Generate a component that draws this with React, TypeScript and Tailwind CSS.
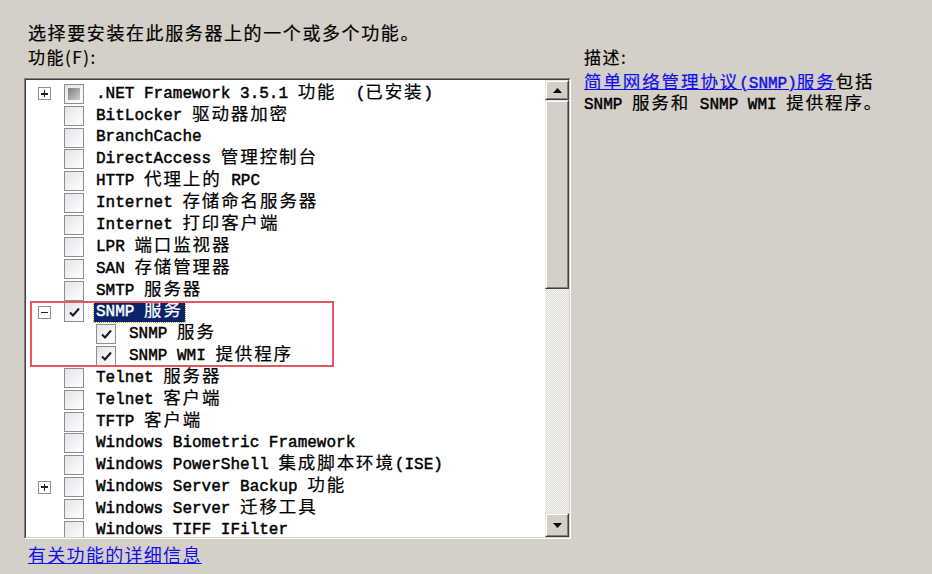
import type { ReactNode } from "react";

type Row = {
  label: string;
  state?: "none" | "checked" | "mixed";
  expander?: "+" | "-";
  child?: boolean;
  selected?: boolean;
};

const rows: Row[] = [
  { label: ".NET Framework 3.5.1 功能  (已安装)", state: "mixed", expander: "+" },
  { label: "BitLocker 驱动器加密" },
  { label: "BranchCache" },
  { label: "DirectAccess 管理控制台" },
  { label: "HTTP 代理上的 RPC" },
  { label: "Internet 存储命名服务器" },
  { label: "Internet 打印客户端" },
  { label: "LPR 端口监视器" },
  { label: "SAN 存储管理器" },
  { label: "SMTP 服务器" },
  { label: "SNMP 服务", state: "checked", expander: "-", selected: true },
  { label: "SNMP 服务", state: "checked", child: true },
  { label: "SNMP WMI 提供程序", state: "checked", child: true },
  { label: "Telnet 服务器" },
  { label: "Telnet 客户端" },
  { label: "TFTP 客户端" },
  { label: "Windows Biometric Framework" },
  { label: "Windows PowerShell 集成脚本环境(ISE)" },
  { label: "Windows Server Backup 功能", expander: "+" },
  { label: "Windows Server 迁移工具" },
  { label: "Windows TIFF IFilter" },
];

const CJK = /([\u2E80-\u9FFF\u3000-\u303F\uFF00-\uFFEF]+)/;

// SimSun-style mixed text: half-width latin, double-width hanzi
function Mixed({ text }: { text: string }) {
  return (
    <>
      {text.split(CJK).map((part, i) =>
        CJK.test(part) ? (
          <span key={i} className="text-[17.5px] tracking-[1.9px] [-webkit-text-stroke:0.2px]">
            {part}
          </span>
        ) : (
          <span key={i} className="whitespace-pre [-webkit-text-stroke:0.45px]">
            {part}
          </span>
        )
      )}
    </>
  );
}

function Expander({ sign }: { sign: "+" | "-" }) {
  return (
    <div className="relative w-[13px] h-[13px] border border-[#8f8f8f] bg-white flex items-center justify-center">
      <div className="absolute w-[7px] h-[1.5px] bg-[#222]" />
      {sign === "+" && <div className="absolute w-[1.5px] h-[7px] bg-[#222]" />}
    </div>
  );
}

function Checkbox({ state = "none" }: { state?: Row["state"] }) {
  return (
    <div className="w-[20px] h-[20px] shrink-0 border border-[#8e8e8e] bg-gradient-to-br from-[#e6e2ea] to-white flex items-center justify-center">
      {state === "mixed" && (
        <div className="w-[12px] h-[12px] bg-gradient-to-br from-[#7e7e7e] to-[#d0d0d0]" />
      )}
      {state === "checked" && (
        <svg width="13" height="13" viewBox="0 0 13 13">
          <path d="M2 6.5 L5 9.5 L11 2.5" fill="none" stroke="#1a1a1a" strokeWidth="2" />
        </svg>
      )}
    </div>
  );
}

function Raised({ className = "", children }: { className?: string; children?: ReactNode }) {
  return (
    <div className={`border border-t-[#e8e6e1] border-l-[#e8e6e1] border-b-[#404040] border-r-[#404040] ${className}`}>
      <div className="w-full h-full border border-t-white border-l-white border-b-[#808080] border-r-[#808080] bg-[#d4d0c8] flex items-center justify-center">
        {children}
      </div>
    </div>
  );
}

function Scrollbar() {
  return (
    <div className="w-[24px] h-full flex flex-col">
      <Raised className="h-[20px] shrink-0">
        <svg width="9" height="5" viewBox="0 0 9 5">
          <path d="M0 5 L4.5 0 L9 5 Z" fill="#000" />
        </svg>
      </Raised>
      <Raised className="h-[189px] shrink-0" />
      <div className="flex-1 bg-[repeating-conic-gradient(#dcdad5_0_25%,#f7f7f5_0_50%)] bg-[length:2px_2px]" />
      <Raised className="h-[24px] shrink-0">
        <svg width="9" height="5" viewBox="0 0 9 5">
          <path d="M0 0 L4.5 5 L9 0 Z" fill="#000" />
        </svg>
      </Raised>
    </div>
  );
}

const cjkFont = { fontFamily: '"Noto Sans CJK SC", sans-serif' };

export default function App() {
  return (
    <div
      className="w-[932px] h-[574px] overflow-hidden bg-[#d4d0c8] text-black"
      style={{ fontFamily: '"Liberation Mono", "Noto Sans CJK SC", monospace' }}
    >
      <p
        className="pl-[28px] pt-[22px] h-[42px] text-[18px] leading-[20px] tracking-[1.6px] [-webkit-text-stroke:0.2px]"
        style={cjkFont}
      >
        选择要安装在此服务器上的一个或多个功能。
      </p>

      <div className="flex mt-[5px]">
        <div className="ml-[24px] w-[547px]">
          <p className="pl-[4px] h-[20px] text-[17px] leading-[20px] tracking-[1.5px] [-webkit-text-stroke:0.2px]" style={cjkFont}>
            功能(F):
          </p>

          <div className="relative mt-[11px] w-[547px] h-[461px] border border-t-[#808080] border-l-[#808080] border-b-white border-r-white">
            <div className="w-full h-full border border-t-[#404040] border-l-[#404040] border-b-[#d4d0c8] border-r-[#d4d0c8] bg-white flex">
              <ul className="flex-1 pt-[3px] overflow-hidden text-[16px]">
                {rows.map((row, i) => (
                  <li key={i} className="h-[21.85px] flex items-center">
                    <div className={`${row.child ? "w-[70px]" : "w-[38px]"} shrink-0 pl-[12px]`}>
                      {row.expander && <Expander sign={row.expander} />}
                    </div>
                    <Checkbox state={row.state} />
                    <span
                      className={`${row.child ? "ml-[11px]" : "ml-[10px]"} px-[2px] leading-[19px] whitespace-nowrap ${
                        row.selected ? "bg-[#0a246a] text-white outline-1 outline-dotted outline-[#c8a040]" : ""
                      }`}
                    >
                      <Mixed text={row.label} />
                    </span>
                  </li>
                ))}
              </ul>
              <Scrollbar />
            </div>

            {/* annotation frame around the SNMP group */}
            <div className="absolute left-[5px] top-[222px] w-[304px] h-[66px] border-2 border-[#e5585e]" />
          </div>

          <p className="pl-[4px] mt-[5px] h-[20px] leading-[20px]">
            <span className="text-[#1010ee] underline text-[18px] tracking-[1.3px]" style={cjkFont}>
              有关功能的详细信息
            </span>
          </p>
        </div>

        <div className="ml-[13px] w-[320px] text-[16px] leading-[20px]">
          <p className="text-[17px] tracking-[1.5px] [-webkit-text-stroke:0.2px]" style={cjkFont}>
            描述:
          </p>
          <div className="mt-[6px]">
            <p className="whitespace-nowrap">
              <span className="text-[#1010ee] underline">
                <Mixed text="简单网络管理协议(SNMP)服务" />
              </span>
              <Mixed text="包括" />
            </p>
            <p className="whitespace-nowrap">
              <Mixed text="SNMP 服务和 SNMP WMI 提供程序。" />
            </p>
          </div>
        </div>
      </div>
    </div>
  );
}
